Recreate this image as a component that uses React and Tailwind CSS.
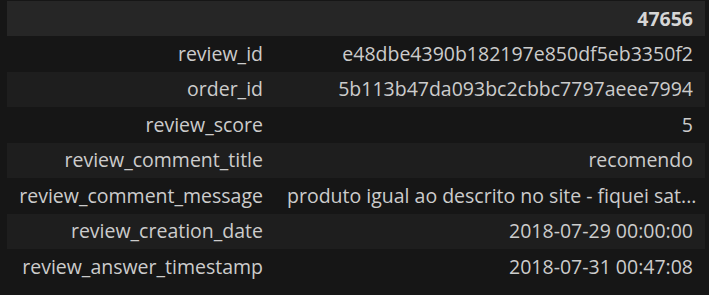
import React from 'react';

const rows = [
    ['review_id', 'e48dbe4390b182197e850df5eb3350f2'],
    ['order_id', '5b113b47da093bc2cbbc7797aeee7994'],
    ['review_score', '5'],
    ['review_comment_title', 'recomendo'],
    ['review_comment_message', 'produto igual ao descrito no site - fiquei sat...'],
    ['review_creation_date', '2018-07-29 00:00:00'],
    ['review_answer_timestamp', '2018-07-31 00:47:08'],
];

const App = () => {
    return (
        <div
            className="w-[709px] h-[295px] bg-[#161616] pt-px pl-[7px] overflow-hidden text-[19.5px] text-[#cccccc]"
            style={{ fontFamily: '"Open Sans", sans-serif' }}
        >
            <div className="w-[698px]">
                {/* Header */}
                <div className="flex h-[35px] items-center bg-[#262626]">
                    <div className="w-[268px] px-3"></div>
                    <div className="flex-1 px-3 text-right font-bold text-[#d6d6d6] leading-[26px]">47656</div>
                </div>

                {rows.map(([label, value], i) => (
                    <div
                        key={label}
                        className={`flex h-[35.5px] items-center ${i % 2 === 1 ? 'bg-[#1e1e1e]' : 'bg-[#161616]'}`}
                    >
                        <div className="w-[268px] shrink-0 px-3 text-right whitespace-nowrap leading-[26px]">{label}</div>
                        <div className="flex-1 min-w-0 px-3 text-right whitespace-nowrap leading-[26px]">{value}</div>
                    </div>
                ))}
            </div>
        </div>
    );
};

export default App;
